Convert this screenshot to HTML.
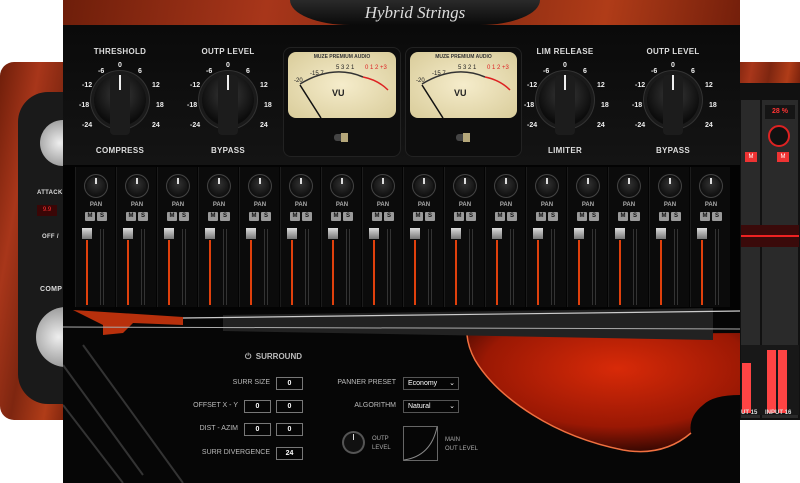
<!DOCTYPE html>
<html><head><meta charset="utf-8"><style>
*{margin:0;padding:0;box-sizing:border-box}
body{width:800px;height:483px;background:#fff;position:relative;overflow:hidden;font-family:"Liberation Sans",sans-serif;color:#ddd}
.a{position:absolute}
.wood{background:linear-gradient(100deg,#6e1e0a,#a8361a 30%,#7e2610 55%,#b03c18 80%,#741f0b)}
.lbl{position:absolute;font-size:8px;font-weight:bold;color:#ddd;text-align:center;letter-spacing:.3px}
.knob{position:absolute;border-radius:50%;background:radial-gradient(circle at 50% 40%,#3a3a3a,#0c0c0c 70%);box-shadow:0 0 0 3px #1a1a1a,0 0 0 4px #333}
.sc{position:absolute;font-size:7px;font-weight:bold;color:#eee}
.strip{position:absolute;top:167px;width:40px;height:140px;background:#0b0b0b;border-left:1px solid #1c1c1c}
.pk{position:absolute;left:11px;top:10px;width:18px;height:18px;border-radius:50%;background:radial-gradient(circle at 50% 40%,#333,#080808);box-shadow:0 0 0 2px #111,0 0 0 3px #444}
.pk:after{content:"";position:absolute;left:8px;top:1px;width:2px;height:6px;background:#ddd}
.pan{position:absolute;top:35px;width:40px;text-align:center;font-size:6px;color:#aaa;font-weight:bold}
.b{position:absolute;top:45px;width:10px;height:9px;background:#9a9a9a;color:#111;font-size:6px;font-weight:bold;text-align:center;line-height:9px;border-radius:1px}
.cap{position:absolute;left:6px;top:61px;width:10px;height:11px;background:linear-gradient(#ddd,#777)}
.rl{position:absolute;left:10px;top:73px;width:2px;height:65px;background:#e0400c}
.ml{position:absolute;left:24px;top:62px;width:1px;height:76px;background:#333;box-shadow:3px 0 0 #333}
.box{position:absolute;height:13px;border:1px solid #777;background:#050505;color:#fff;font-size:7px;font-weight:bold;text-align:center;line-height:11px}
.t{position:absolute;font-size:7px;color:#bbb;text-align:right}
</style></head><body>
<!-- left background panel -->
<div class="a wood" style="left:0;top:62px;width:70px;height:358px;border-radius:14px 0 0 14px"></div>
<div class="a" style="left:18px;top:92px;width:52px;height:312px;background:#1a1a1a;border-radius:30px 0 0 30px"></div>
<div class="a" style="left:40px;top:120px;width:28px;height:46px;border-radius:23px 0 0 23px;background:radial-gradient(circle at 70% 50%,#eee,#888)"></div>
<div class="a" style="left:36px;top:307px;width:32px;height:60px;border-radius:30px 0 0 30px;background:radial-gradient(circle at 70% 50%,#eee,#888)"></div>
<div class="lbl" style="left:37px;top:190px;font-size:6px">ATTACK</div>
<div class="a" style="left:37px;top:205px;width:20px;height:11px;background:#3a0606;color:#f33;font-size:6px;text-align:center;line-height:11px">9.9</div>
<div class="lbl" style="left:42px;top:234px;font-size:6px">OFF /</div>
<div class="lbl" style="left:40px;top:286px;font-size:7px">COMP</div>
<!-- right background panel -->
<div class="a wood" style="left:730px;top:62px;width:70px;height:30px"></div>
<div class="a" style="left:730px;top:83px;width:70px;height:337px;background:#111"></div>
<div class="a" style="left:741px;top:100px;width:19px;height:318px;background:#2a2a2a"></div>
<div class="a" style="left:762px;top:100px;width:36px;height:318px;background:#2a2a2a"></div>
<div class="a" style="left:765px;top:105px;width:30px;height:14px;background:#151515;color:#f33;font-size:7px;font-weight:bold;text-align:center;line-height:14px">28 %</div>
<div class="a" style="left:768px;top:125px;width:22px;height:22px;border-radius:50%;background:#111;border:2px solid #d22"></div>
<div class="a" style="left:777px;top:152px;width:12px;height:10px;background:#e33;color:#fff;font-size:6px;text-align:center;line-height:10px">M</div>
<div class="a" style="left:745px;top:152px;width:12px;height:10px;background:#e33;color:#fff;font-size:6px;text-align:center;line-height:10px">M</div>
<div class="a" style="left:741px;top:225px;width:58px;height:22px;background:#3a0a0a"></div>
<div class="a" style="left:741px;top:235px;width:58px;height:2px;background:#e22"></div>
<div class="a" style="left:741px;top:345px;width:58px;height:70px;background:#181818"></div>
<div class="a" style="left:742px;top:363px;width:9px;height:50px;background:#f44"></div>
<div class="a" style="left:767px;top:350px;width:9px;height:63px;background:#f44"></div>
<div class="a" style="left:778px;top:350px;width:9px;height:63px;background:#f44"></div>
<div class="a" style="left:765px;top:410px;font-size:6px;color:#ddd;font-weight:bold">INPUT 16</div>
<div class="a" style="left:741px;top:410px;font-size:6px;color:#ddd;font-weight:bold">UT 15</div>
<!-- main panel -->
<div class="a" style="left:63px;top:0;width:677px;height:483px;background:#060606"></div>
<div class="a wood" style="left:63px;top:0;width:677px;height:25px"></div>
<div class="a" style="left:290px;top:0;width:250px;height:25px;background:linear-gradient(#2a2a2a,#0a0a0a);border-radius:0 0 60px 60px/0 0 25px 25px"></div>
<div class="a" style="top:3px;width:200px;text-align:center;font-family:'Liberation Serif',serif;font-style:italic;font-size:17px;color:#ddd;left:315px">Hybrid Strings</div>
<div class="a" style="left:63px;top:25px;width:677px;height:140px;background:linear-gradient(#0a0a0a,#141414)"></div>
<!-- big knobs -->
<div class="lbl" style="left:90px;top:47px;width:60px">THRESHOLD</div>
<div class="lbl" style="left:198px;top:47px;width:60px">OUTP LEVEL</div>
<div class="lbl" style="left:535px;top:47px;width:60px">LIM RELEASE</div>
<div class="lbl" style="left:643px;top:47px;width:60px">OUTP LEVEL</div>
<div class="lbl" style="left:90px;top:146px;width:60px">COMPRESS</div>
<div class="lbl" style="left:198px;top:146px;width:60px">BYPASS</div>
<div class="lbl" style="left:535px;top:146px;width:60px">LIMITER</div>
<div class="lbl" style="left:643px;top:146px;width:60px">BYPASS</div>
<div class="knob" style="left:94px;top:74px;width:52px;height:52px"></div>
<div class="knob" style="left:202px;top:74px;width:52px;height:52px"></div>
<div class="knob" style="left:539px;top:74px;width:52px;height:52px"></div>
<div class="knob" style="left:647px;top:74px;width:52px;height:52px"></div>
<div class="a" style="left:110px;top:75px;width:20px;height:60px;background:#1c1c1c;border-radius:4px"></div>
<div class="a" style="left:218px;top:75px;width:20px;height:60px;background:#1c1c1c;border-radius:4px"></div>
<div class="a" style="left:555px;top:75px;width:20px;height:60px;background:#1c1c1c;border-radius:4px"></div>
<div class="a" style="left:663px;top:75px;width:20px;height:60px;background:#1c1c1c;border-radius:4px"></div>
<div class="a" style="left:119px;top:75px;width:2px;height:15px;background:#eee"></div>
<div class="a" style="left:227px;top:75px;width:2px;height:15px;background:#eee"></div>
<div class="a" style="left:564px;top:75px;width:2px;height:15px;background:#eee"></div>
<div class="a" style="left:672px;top:75px;width:2px;height:15px;background:#eee"></div>
<div class="sc" style="left:118px;top:62px">0</div><div class="sc" style="left:98px;top:68px">-6</div><div class="sc" style="left:138px;top:68px">6</div><div class="sc" style="left:82px;top:82px">-12</div><div class="sc" style="left:152px;top:82px">12</div><div class="sc" style="left:79px;top:102px">-18</div><div class="sc" style="left:156px;top:102px">18</div><div class="sc" style="left:82px;top:122px">-24</div><div class="sc" style="left:152px;top:122px">24</div>
<div class="sc" style="left:226px;top:62px">0</div><div class="sc" style="left:206px;top:68px">-6</div><div class="sc" style="left:246px;top:68px">6</div><div class="sc" style="left:190px;top:82px">-12</div><div class="sc" style="left:260px;top:82px">12</div><div class="sc" style="left:187px;top:102px">-18</div><div class="sc" style="left:264px;top:102px">18</div><div class="sc" style="left:190px;top:122px">-24</div><div class="sc" style="left:260px;top:122px">24</div>
<div class="sc" style="left:563px;top:62px">0</div><div class="sc" style="left:543px;top:68px">-6</div><div class="sc" style="left:583px;top:68px">6</div><div class="sc" style="left:527px;top:82px">-12</div><div class="sc" style="left:597px;top:82px">12</div><div class="sc" style="left:524px;top:102px">-18</div><div class="sc" style="left:601px;top:102px">18</div><div class="sc" style="left:527px;top:122px">-24</div><div class="sc" style="left:597px;top:122px">24</div>
<div class="sc" style="left:671px;top:62px">0</div><div class="sc" style="left:651px;top:68px">-6</div><div class="sc" style="left:691px;top:68px">6</div><div class="sc" style="left:635px;top:82px">-12</div><div class="sc" style="left:705px;top:82px">12</div><div class="sc" style="left:632px;top:102px">-18</div><div class="sc" style="left:709px;top:102px">18</div><div class="sc" style="left:635px;top:122px">-24</div><div class="sc" style="left:705px;top:122px">24</div>
<!-- VU meters -->
<div class="a" style="left:283px;top:47px;width:118px;height:110px;background:#0d0d0d;border-radius:8px;border:1px solid #222"></div>
<div class="a" style="left:405px;top:47px;width:117px;height:110px;background:#0d0d0d;border-radius:8px;border:1px solid #222"></div>
<div class="a" style="left:288px;top:52px;width:108px;height:66px;background:radial-gradient(#f5eccb,#d9cc9a);border-radius:8px"></div>
<div class="a" style="left:410px;top:52px;width:107px;height:66px;background:radial-gradient(#f5eccb,#d9cc9a);border-radius:8px"></div>
<div class="a" style="left:288px;top:54px;width:108px;text-align:center;font-size:5px;color:#333;font-weight:bold">MUZE PREMIUM AUDIO</div>
<div class="a" style="left:410px;top:54px;width:107px;text-align:center;font-size:5px;color:#333;font-weight:bold">MUZE PREMIUM AUDIO</div>
<svg class="a" style="left:288px;top:52px" width="108" height="66"><path d="M12 32 Q45 12 75 25" stroke="#333" fill="none" stroke-width="1.5"/><path d="M75 25 Q90 28 100 38" stroke="#d22" fill="none" stroke-width="1.5"/><line x1="12" y1="33" x2="33" y2="66" stroke="#111" stroke-width="1.5"/><text x="6" y="30" font-size="6" fill="#222">-20</text><text x="22" y="23" font-size="6" fill="#222">-15 7</text><text x="48" y="17" font-size="6" fill="#222">5 3 2 1</text><text x="77" y="17" font-size="6" fill="#d22">0 1 2 +3</text><text x="44" y="44" font-size="9" font-weight="bold" fill="#222">VU</text></svg>
<svg class="a" style="left:410px;top:52px" width="108" height="66"><path d="M12 32 Q45 12 75 25" stroke="#333" fill="none" stroke-width="1.5"/><path d="M75 25 Q90 28 100 38" stroke="#d22" fill="none" stroke-width="1.5"/><line x1="12" y1="33" x2="33" y2="66" stroke="#111" stroke-width="1.5"/><text x="6" y="30" font-size="6" fill="#222">-20</text><text x="22" y="23" font-size="6" fill="#222">-15 7</text><text x="48" y="17" font-size="6" fill="#222">5 3 2 1</text><text x="77" y="17" font-size="6" fill="#d22">0 1 2 +3</text><text x="44" y="44" font-size="9" font-weight="bold" fill="#222">VU</text></svg>
<div class="a" style="left:334px;top:134px;width:14px;height:7px;background:#444;border-radius:3px"></div><div class="a" style="left:341px;top:133px;width:7px;height:9px;background:#b5a77a"></div>
<div class="a" style="left:456px;top:134px;width:14px;height:7px;background:#444;border-radius:3px"></div><div class="a" style="left:463px;top:133px;width:7px;height:9px;background:#b5a77a"></div>
<!-- strips -->
<div class="a" style="left:63px;top:165px;width:677px;height:145px;background:#030303"></div>
<div class="strip" style="left:75px"><div class="pk"></div><div class="pan">PAN</div><div class="b" style="left:9px">M</div><div class="b" style="left:21px">S</div><div class="cap"></div><div class="rl"></div><div class="ml"></div></div>
<div class="strip" style="left:116px"><div class="pk"></div><div class="pan">PAN</div><div class="b" style="left:9px">M</div><div class="b" style="left:21px">S</div><div class="cap"></div><div class="rl"></div><div class="ml"></div></div>
<div class="strip" style="left:157px"><div class="pk"></div><div class="pan">PAN</div><div class="b" style="left:9px">M</div><div class="b" style="left:21px">S</div><div class="cap"></div><div class="rl"></div><div class="ml"></div></div>
<div class="strip" style="left:198px"><div class="pk"></div><div class="pan">PAN</div><div class="b" style="left:9px">M</div><div class="b" style="left:21px">S</div><div class="cap"></div><div class="rl"></div><div class="ml"></div></div>
<div class="strip" style="left:239px"><div class="pk"></div><div class="pan">PAN</div><div class="b" style="left:9px">M</div><div class="b" style="left:21px">S</div><div class="cap"></div><div class="rl"></div><div class="ml"></div></div>
<div class="strip" style="left:280px"><div class="pk"></div><div class="pan">PAN</div><div class="b" style="left:9px">M</div><div class="b" style="left:21px">S</div><div class="cap"></div><div class="rl"></div><div class="ml"></div></div>
<div class="strip" style="left:321px"><div class="pk"></div><div class="pan">PAN</div><div class="b" style="left:9px">M</div><div class="b" style="left:21px">S</div><div class="cap"></div><div class="rl"></div><div class="ml"></div></div>
<div class="strip" style="left:362px"><div class="pk"></div><div class="pan">PAN</div><div class="b" style="left:9px">M</div><div class="b" style="left:21px">S</div><div class="cap"></div><div class="rl"></div><div class="ml"></div></div>
<div class="strip" style="left:403px"><div class="pk"></div><div class="pan">PAN</div><div class="b" style="left:9px">M</div><div class="b" style="left:21px">S</div><div class="cap"></div><div class="rl"></div><div class="ml"></div></div>
<div class="strip" style="left:444px"><div class="pk"></div><div class="pan">PAN</div><div class="b" style="left:9px">M</div><div class="b" style="left:21px">S</div><div class="cap"></div><div class="rl"></div><div class="ml"></div></div>
<div class="strip" style="left:485px"><div class="pk"></div><div class="pan">PAN</div><div class="b" style="left:9px">M</div><div class="b" style="left:21px">S</div><div class="cap"></div><div class="rl"></div><div class="ml"></div></div>
<div class="strip" style="left:526px"><div class="pk"></div><div class="pan">PAN</div><div class="b" style="left:9px">M</div><div class="b" style="left:21px">S</div><div class="cap"></div><div class="rl"></div><div class="ml"></div></div>
<div class="strip" style="left:567px"><div class="pk"></div><div class="pan">PAN</div><div class="b" style="left:9px">M</div><div class="b" style="left:21px">S</div><div class="cap"></div><div class="rl"></div><div class="ml"></div></div>
<div class="strip" style="left:608px"><div class="pk"></div><div class="pan">PAN</div><div class="b" style="left:9px">M</div><div class="b" style="left:21px">S</div><div class="cap"></div><div class="rl"></div><div class="ml"></div></div>
<div class="strip" style="left:649px"><div class="pk"></div><div class="pan">PAN</div><div class="b" style="left:9px">M</div><div class="b" style="left:21px">S</div><div class="cap"></div><div class="rl"></div><div class="ml"></div></div>
<div class="strip" style="left:690px"><div class="pk"></div><div class="pan">PAN</div><div class="b" style="left:9px">M</div><div class="b" style="left:21px">S</div><div class="cap"></div><div class="rl"></div><div class="ml"></div></div>
<!-- violin -->
<svg class="a" style="left:63px;top:305px" width="677" height="178">
<defs><radialGradient id="v" cx="55%" cy="30%" r="70%"><stop offset="0" stop-color="#d82a08"/><stop offset=".7" stop-color="#9a1804"/><stop offset="1" stop-color="#3a0802"/></radialGradient></defs>
<path d="M404 30 L677 28 L677 90 Q650 90 640 100 Q625 112 628 128 Q600 152 560 145 Q510 135 470 110 Q430 85 412 55 Q405 42 404 30Z" fill="url(#v)"/>
<path d="M404 30 Q405 42 412 55 Q430 85 470 110 Q510 135 560 145 Q600 152 628 128" stroke="#f07040" fill="none" stroke-width="1.5"/>
<path d="M160 10 L650 3 L650 35 L160 26 Z" fill="#222"/>
<path d="M10 5 L120 12 L120 20 L70 18 L60 28 L40 30 L40 20 Z" fill="#b8300c"/>
<line x1="120" y1="13" x2="680" y2="6" stroke="#ccc" stroke-width="1.2"/>
<line x1="0" y1="22" x2="680" y2="24" stroke="#aaa" stroke-width="1"/>
<path d="M0 60 L80 170 M20 40 L120 178 M0 100 L60 178" stroke="#333" stroke-width="2"/>
</svg>
<!-- surround -->
<div class="a" style="left:245px;top:352px;font-size:8px;color:#bbb;font-weight:bold">⏻ &nbsp;SURROUND</div>
<div class="t" style="left:180px;top:379px;width:90px">SURR SIZE</div>
<div class="t" style="left:180px;top:402px;width:58px">OFFSET X - Y</div>
<div class="t" style="left:180px;top:425px;width:58px">DIST - AZIM</div>
<div class="t" style="left:180px;top:449px;width:90px">SURR DIVERGENCE</div>
<div class="box" style="left:276px;top:377px;width:27px">0</div>
<div class="box" style="left:244px;top:400px;width:27px">0</div>
<div class="box" style="left:276px;top:400px;width:27px">0</div>
<div class="box" style="left:244px;top:423px;width:27px">0</div>
<div class="box" style="left:276px;top:423px;width:27px">0</div>
<div class="box" style="left:276px;top:447px;width:27px">24</div>
<div class="t" style="left:330px;top:379px;width:66px">PANNER PRESET</div>
<div class="t" style="left:330px;top:402px;width:66px">ALGORITHM</div>
<div class="box" style="left:403px;top:377px;width:56px;text-align:left;padding-left:4px;font-weight:normal;border-color:#555">Economy <span style="float:right;padding-right:3px">⌄</span></div>
<div class="box" style="left:403px;top:400px;width:56px;text-align:left;padding-left:4px;font-weight:normal;border-color:#555">Natural <span style="float:right;padding-right:3px">⌄</span></div>
<div class="a" style="left:344px;top:433px;width:19px;height:19px;border-radius:50%;background:#111;box-shadow:0 0 0 2px #555"></div>
<div class="a" style="left:353px;top:434px;width:1px;height:6px;background:#ddd"></div>
<div class="a" style="left:372px;top:435px;font-size:6px;color:#aaa;line-height:9px">OUTP<br>LEVEL</div>
<svg class="a" style="left:403px;top:426px" width="35" height="35"><rect x=".5" y=".5" width="34" height="34" fill="none" stroke="#666"/><path d="M1 34 Q28 30 34 1" stroke="#888" fill="none"/></svg>
<div class="a" style="left:445px;top:436px;font-size:6px;color:#aaa;line-height:9px">MAIN<br>OUT LEVEL</div>
</body></html>
